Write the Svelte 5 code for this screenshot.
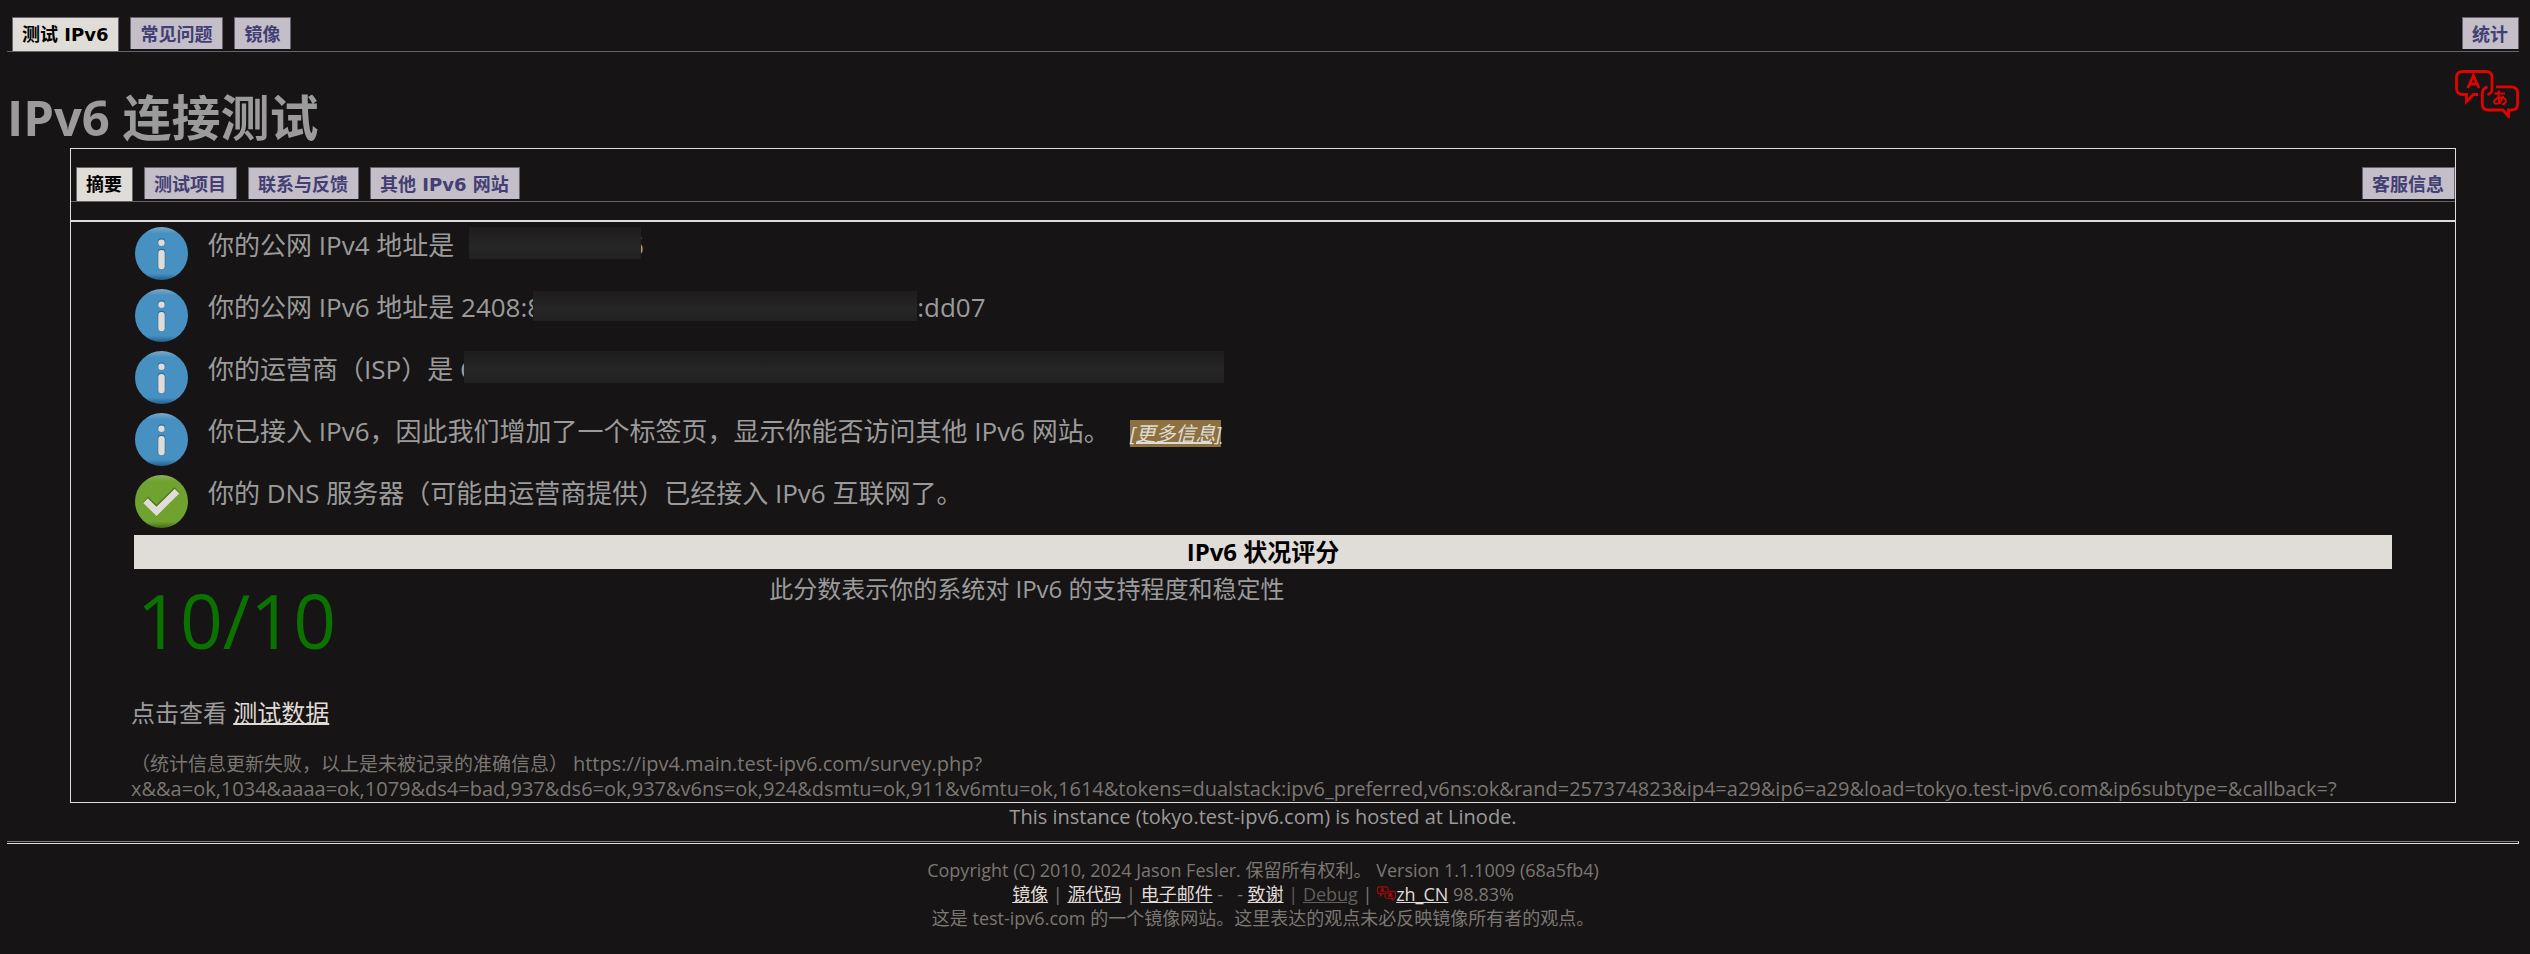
<script>
  const siteTabs = ['测试 IPv6', '常见问题', '镜像'];
  const panelTabs = ['摘要', '测试项目', '联系与反馈', '其他 IPv6 网站'];
  const survey =
    'x&&a=ok,1034&aaaa=ok,1079&ds4=bad,937&ds6=ok,937&v6ns=ok,924&dsmtu=ok,911&v6mtu=ok,1614&tokens=dualstack:ipv6_preferred,v6ns:ok&rand=257374823&ip4=a29&ip6=a29&load=tokyo.test-ipv6.com&ip6subtype=&callback=?';
</script>

{#snippet tabs(items, last)}
  <nav class="tabs">
    {#each items as item, i}
      <a href="#top" class="tab" class:active={i === 0}>{item}</a>
    {/each}
    <a href="#top" class="tab end">{last}</a>
  </nav>
{/snippet}

{#snippet info()}
  <svg class="status" viewBox="0 0 53 53" aria-hidden="true">
    <defs>
      <linearGradient id="blue" x1="0" y1="0" x2="0" y2="1">
        <stop offset="0" stop-color="#7fa9c4" />
        <stop offset="0.12" stop-color="#4790c2" />
        <stop offset="0.88" stop-color="#4790c2" />
        <stop offset="1" stop-color="#235f8a" />
      </linearGradient>
    </defs>
    <circle cx="26.5" cy="26.5" r="26.5" fill="url(#blue)" />
    <circle cx="26.5" cy="15" r="3.8" fill="#2f6d98" />
    <circle cx="26.5" cy="15.8" r="3.2" fill="#e0dcd8" />
    <rect x="22.7" y="21.7" width="7.6" height="20.6" rx="3.4" fill="#2f6d98" />
    <rect x="23.3" y="23" width="6.4" height="19.2" rx="3" fill="#e0dcd8" />
  </svg>
{/snippet}

{#snippet check()}
  <svg class="status" viewBox="0 0 53 53" aria-hidden="true">
    <defs>
      <linearGradient id="green" x1="0" y1="0" x2="0" y2="1">
        <stop offset="0" stop-color="#8fae5e" />
        <stop offset="0.12" stop-color="#70a230" />
        <stop offset="0.88" stop-color="#70a230" />
        <stop offset="1" stop-color="#46691a" />
      </linearGradient>
    </defs>
    <circle cx="26.5" cy="26.5" r="26.5" fill="url(#green)" />
    <path d="M10.5 24.5 21.5 35 42 15" fill="none" stroke="#4c7319" stroke-width="7.4" />
    <path d="M10.5 25.7 21.5 36.3 42 16.2" fill="none" stroke="#e0dcd8" stroke-width="6.6" />
  </svg>
{/snippet}

{#snippet language(cls)}
  <svg class={cls} viewBox="0 0 64 48" fill="none" stroke="currentColor" aria-hidden="true">
    <path d="M23 24.5H18.5L11.5 31.5V24.5H8Q1.5 24.5 1.5 18.5V7Q1.5 1.5 8 1.5H30.5Q37 1.5 37 7V19Q37 23 32.5 24.8" />
    <path d="M32.5 16.8Q27.3 18.5 27.3 23V34Q27.3 40 33.5 40H48L53.5 46.5V40H56Q62.6 40 62.6 34V23Q62.6 16.8 56 16.8H41" />
    <path d="M12.8 18 18.4 5.5 24 18M15 14H22" />
    <path class="kana" d="M39.5 23.5H50M43.8 20.5Q42.8 29 45.2 34M48.3 26Q45.5 34 41 33.8 38.3 33 39.5 30.5 41.5 27.5 46.5 27.5 51.3 28 50.8 31.5 50 34 46.8 34.5" />
  </svg>
{/snippet}

<div class="page" id="top">
  {@render tabs(siteTabs, '统计')}

  <header>
    <h1>IPv6 连接测试</h1>
    <a href="#top" aria-label="语言">{@render language('lang')}</a>
  </header>

  <main>
    {@render tabs(panelTabs, '客服信息')}
    <section class="body">
      <ul>
        <li>{@render info()}<p>你的公网 IPv4 地址是 <span class="mask short"></span>6</p></li>
        <li>
          {@render info()}
          <p>你的公网 IPv6 地址是 2408:8<span class="mask mid"></span>:dd07</p>
        </li>
        <li>{@render info()}<p>你的运营商（ISP）是 C<span class="mask long"></span></p></li>
        <li>
          {@render info()}
          <p>
            你已接入 IPv6，因此我们增加了一个标签页，显示你能否访问其他 IPv6 网站。<a href="#top" class="more">[更多信息]</a>
          </p>
        </li>
        <li>{@render check()}<p>你的 DNS 服务器（可能由运营商提供）已经接入 IPv6 互联网了。</p></li>
      </ul>

      <div class="score">
        <h2>IPv6 状况评分</h2>
        <div class="result">
          <strong>10/10</strong>
          <p>此分数表示你的系统对 IPv6 的支持程度和稳定性</p>
        </div>
      </div>

      <p class="data">点击查看 <a href="#top">测试数据</a></p>
      <p class="survey">
        （统计信息更新失败，以上是未被记录的准确信息） <span class="url">https://ipv4.main.test-ipv6.com/survey.php?<br />{survey}</span>
      </p>
    </section>
  </main>

  <p class="host">This instance (tokyo.test-ipv6.com) is hosted at Linode.</p>
  <hr />
  <footer>
    <div>Copyright (C) 2010, 2024 Jason Fesler. 保留所有权利。 Version 1.1.1009 (68a5fb4)</div>
    <div>
      <a href="#top">镜像</a> | <a href="#top">源代码</a> | <a href="#top">电子邮件</a> - &nbsp; -
      <a href="#top">致谢</a> <span class="dim">| <a href="#top">Debug</a></span> |
      {@render language('mini')}<a href="#top">zh_CN</a> 98.83%
    </div>
    <div>这是 test-ipv6.com 的一个镜像网站。这里表达的观点未必反映镜像所有者的观点。</div>
  </footer>
</div>

<style>
  :global(body) {
    background: #161415;
  }
  .page {
    padding: 17px 11px 0 7px;
    color: #9b9b9b;
    font-family: 'Open Sans', 'Noto Sans CJK SC', sans-serif;
    font-size: 24px;
    line-height: 32px;
  }
  h1, h2, p, ul {
    margin: 0;
    padding: 0;
    font-weight: 400;
  }
  .tabs {
    display: flex;
    align-items: flex-start;
    gap: 11px;
    height: 34px;
    padding-left: 5px;
    border-bottom: 1px solid #66646a;
    font: bold 18px/33px 'DejaVu Sans', 'Noto Sans CJK SC', sans-serif;
  }
  .tab {
    height: 31px;
    padding: 0 10px 0 9px;
    border: 1px solid #66646a;
    border-bottom: 0;
    background: #c3bec8;
    color: #433f74;
    text-decoration: none;
    white-space: nowrap;
  }
  .tab.active {
    height: 33px;
    background: #e0dcd8;
    color: #000;
  }
  .tab.end {
    margin-left: auto;
  }
  header {
    display: flex;
    justify-content: space-between;
    padding-top: 18px;
    height: 78px;
  }
  h1 {
    margin-top: 17px;
    font-size: 49px;
    line-height: 60px;
    font-weight: 700;
  }
  .lang {
    display: block;
    width: 64px;
    height: 48px;
    color: #e00400;
    stroke-width: 2.8;
  }
  .lang .kana {
    stroke-width: 2;
  }
  main {
    margin: 0 63px;
    padding-top: 18px;
    border: 1px solid #e0dcd8;
  }
  .body {
    margin-top: 18px;
    padding: 5px 60px 0;
    border-top: 2px solid #e0dcd8;
  }
  ul {
    padding-left: 4px;
    list-style: none;
  }
  li {
    display: flex;
    gap: 20px;
    height: 62px;
    font-size: 26px;
    line-height: 36px;
  }
  li:last-child {
    height: 60px;
  }
  .status {
    flex: none;
    width: 53px;
    height: 53px;
  }
  .mask {
    position: relative;
    display: inline-block;
    height: 32px;
    vertical-align: top;
    background: linear-gradient(#1e1c1d, #262626 60%, #222122);
  }
  .short {
    width: 172px;
    margin: 0 -12px 0 8px;
  }
  .mid {
    width: 384px;
    height: 30px;
    margin: 2px 0 0 -9px;
  }
  .long {
    width: 760px;
    margin-left: -12px;
  }
  .more {
    margin-left: 20px;
    background: #8c713e;
    color: #e0dcd8;
    font-size: 20px;
    font-style: italic;
  }
  .score {
    margin: 0 3px;
  }
  h2 {
    background: #e0dcd8;
    color: #000;
    font-size: 24px;
    line-height: 34px;
    font-weight: 700;
    text-align: center;
  }
  .result {
    display: grid;
    grid-template-columns: 28fr 72fr;
    height: 124px;
    padding-top: 4px;
  }
  .result p {
    padding-left: 3px;
  }
  strong {
    padding-left: 3px;
    color: #0b7200;
    font-size: 75px;
    line-height: 94px;
    font-weight: 400;
  }
  a {
    color: #e0dcd8;
  }
  .data a {
    text-decoration-thickness: 2px;
  }
  .survey {
    padding-top: 23px;
    color: #7b7772;
    font-size: 19px;
    line-height: 25px;
  }
  .url {
    font-size: 20px;
    line-height: 23px;
  }
  .host {
    font-size: 20px;
    line-height: 27px;
    text-align: center;
  }
  hr {
    height: 1px;
    margin: 11px 0 0;
    border: solid #e0dcd8;
    border-width: 1px 1px 1px 0;
    border-top-color: #7c7a7b;
  }
  footer {
    padding-top: 14px;
    color: #7b7772;
    font-size: 18px;
    line-height: 24px;
    text-align: center;
  }
  .dim, .dim a {
    color: #625f5c;
  }
  .mini {
    width: 19px;
    height: 15px;
    color: #a80808;
    stroke-width: 4;
    vertical-align: baseline;
  }
</style>
